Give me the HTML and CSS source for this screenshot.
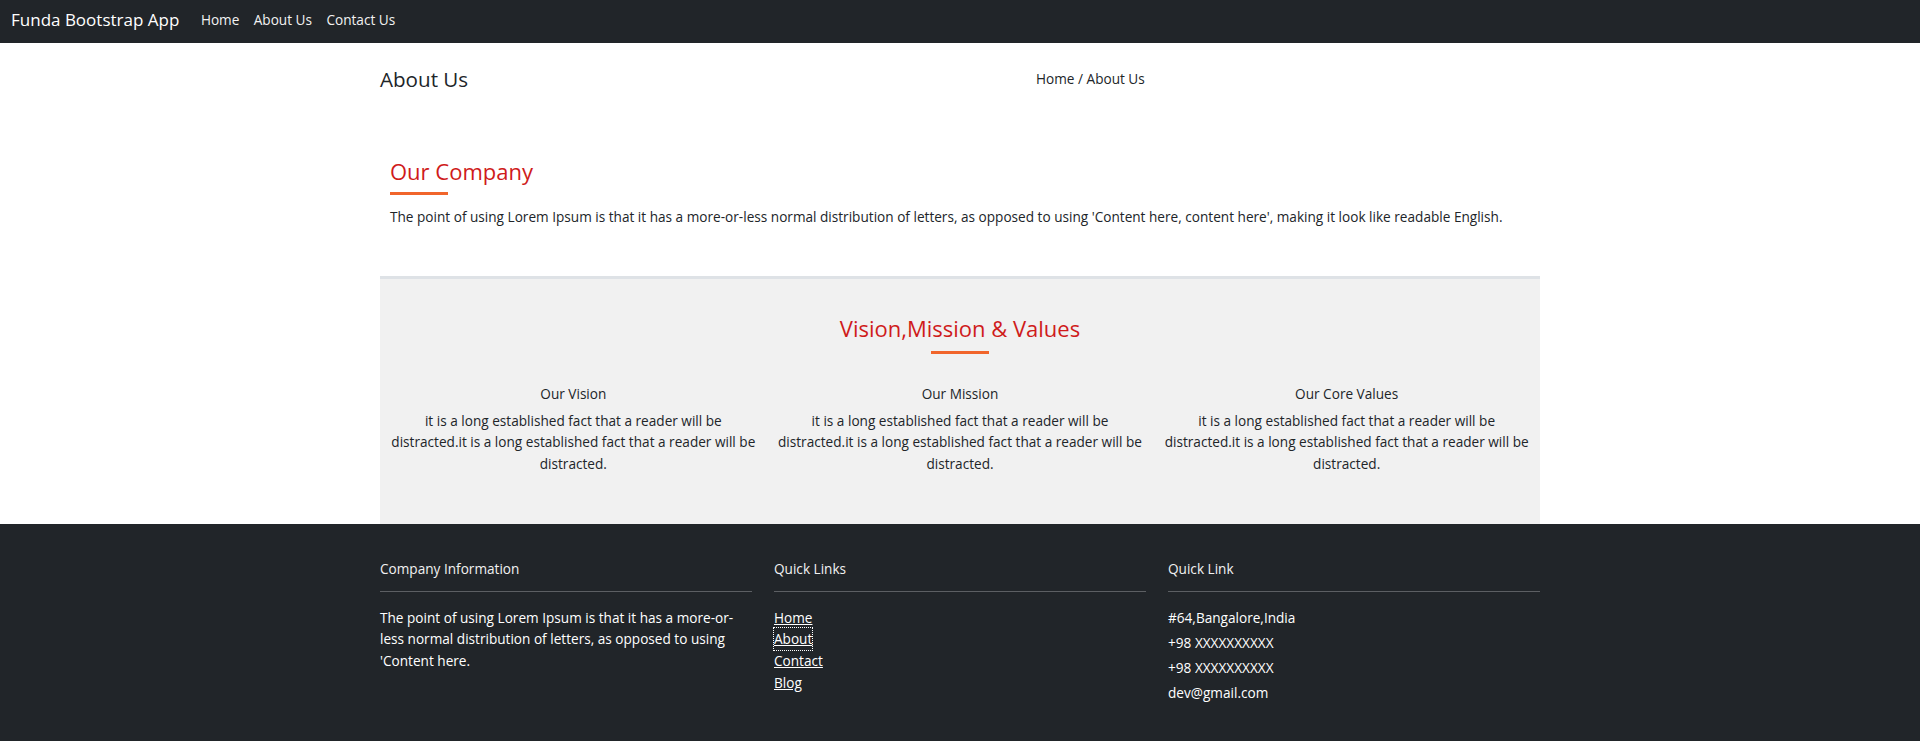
FILE: index.html
```html
<!DOCTYPE html>
<html lang="en">
<head>
<meta charset="utf-8">
<title>About Us - Funda Bootstrap App</title>
<link rel="stylesheet" href="styles.css">
</head>
<body>
<nav class="navbar">
  <a class="brand" href="#">Funda Bootstrap App</a>
  <ul class="nav-links">
    <li><a href="#">Home</a></li>
    <li><a href="#">About Us</a></li>
    <li><a href="#">Contact Us</a></li>
  </ul>
</nav>

<section class="container page-head">
  <h4 class="page-title">About Us</h4>
  <div class="crumbs">Home / About Us</div>
</section>

<section class="container company">
  <h3 class="section-title">Our Company</h3>
  <div class="underline"></div>
  <p class="company-text">The point of using Lorem Ipsum is that it has a more-or-less normal distribution of letters, as opposed to using 'Content here, content here', making it look like readable English.</p>
</section>

<section class="container vmv">
  <h3 class="section-title centered">Vision,Mission &amp; Values</h3>
  <div class="underline centered-line"></div>
  <div class="vmv-cols">
    <div class="vmv-col">
      <h6 class="vmv-title">Our Vision</h6>
      <p class="vmv-text">it is a long established fact that a reader will be distracted.it is a long established fact that a reader will be distracted.</p>
    </div>
    <div class="vmv-col">
      <h6 class="vmv-title">Our Mission</h6>
      <p class="vmv-text">it is a long established fact that a reader will be distracted.it is a long established fact that a reader will be distracted.</p>
    </div>
    <div class="vmv-col">
      <h6 class="vmv-title">Our Core Values</h6>
      <p class="vmv-text">it is a long established fact that a reader will be distracted.it is a long established fact that a reader will be distracted.</p>
    </div>
  </div>
</section>

<footer class="footer">
  <div class="container footer-cols">
    <div class="footer-col">
      <h6 class="footer-title">Company Information</h6>
      <hr class="footer-rule">
      <p class="footer-text">The point of using Lorem Ipsum is that it has a more-or-less normal distribution of letters, as opposed to using 'Content here.</p>
    </div>
    <div class="footer-col">
      <h6 class="footer-title">Quick Links</h6>
      <hr class="footer-rule">
      <ul class="footer-links">
        <li><a href="#">Home</a></li>
        <li><a href="#" class="focused">About</a></li>
        <li><a href="#">Contact</a></li>
        <li><a href="#">Blog</a></li>
      </ul>
    </div>
    <div class="footer-col">
      <h6 class="footer-title">Quick Link</h6>
      <hr class="footer-rule">
      <ul class="footer-contact">
        <li>#64,Bangalore,India</li>
        <li>+98 XXXXXXXXXX</li>
        <li>+98 XXXXXXXXXX</li>
        <li>dev@gmail.com</li>
      </ul>
    </div>
  </div>
</footer>
</body>
</html>
```

FILE: styles.css
```css
* {
  box-sizing: border-box;
}

html {
  background: #212529;
}

body {
  margin: 0;
  background: #ffffff;
  font-family: "Open Sans", "Liberation Sans", sans-serif;
  font-size: 13.62px;
  line-height: 21.6px;
  color: #212529;
}

/* Navbar */
.navbar {
  height: 43px;
  background: #212529;
  display: flex;
  align-items: center;
  padding: 0 11px 3px;
}

.brand {
  color: #ffffff;
  font-size: 17px;
  line-height: 24px;
  text-decoration: none;
  margin-right: 14.4px;
}

.nav-links {
  display: flex;
  list-style: none;
  margin: 0;
  padding: 0;
}

.nav-links a {
  display: block;
  color: #f2f2f2;
  text-decoration: none;
  padding: 0 7.2px;
}

/* Layout */
.container {
  width: 1160px;
  margin: 0 auto;
}

.page-head {
  display: grid;
  grid-template-columns: 656px 1fr;
  align-items: center;
  padding-top: 23px;
}

.page-title {
  margin: 0;
  font-size: 20.6px;
  line-height: 26px;
  font-weight: 400;
}

.crumbs {
  line-height: 21.6px;
}

/* Company */
.company {
  padding: 65.6px 10px 0;
}

.section-title {
  margin: 0;
  font-size: 22px;
  line-height: 26.4px;
  font-weight: 400;
  color: #cf1b1b;
}

.underline {
  width: 58px;
  height: 3px;
  background: #f1652b;
  margin-top: 8px;
}

.company-text {
  margin: 10.6px 0 48.8px;
}

/* Vision, Mission & Values */
.vmv {
  background: #f1f1f1;
  border-top: 3px solid #dee2e6;
  padding: 36.3px 0 49.6px;
}

.centered {
  text-align: center;
}

.centered-line {
  margin: 9.3px auto 0;
}

.vmv-cols {
  display: grid;
  grid-template-columns: repeat(3, 1fr);
  margin-top: 28.9px;
}

.vmv-col {
  padding: 0 8px;
  text-align: center;
}

.vmv-title {
  margin: 0 0 5.1px;
  font-size: 13.62px;
  line-height: 21.6px;
  font-weight: 400;
}

.vmv-text {
  margin: 0;
}

/* Footer */
.footer {
  background: #212529;
  color: #ffffff;
  padding: 34.2px 0 35.5px;
}

.footer-cols {
  display: grid;
  grid-template-columns: repeat(3, 1fr);
  column-gap: 22px;
}

.footer-title {
  margin: 0;
  font-size: 13.62px;
  line-height: 21.6px;
  font-weight: 400;
  color: #f1f1f1;
}

.footer-rule {
  border: 0;
  height: 1px;
  background: #5c5f63;
  margin: 11.2px 0 0;
}

.footer-text {
  margin: 14.9px 0 0;
}

.footer-links {
  list-style: none;
  margin: 14.9px 0 0;
  padding: 0;
}

.footer-links a {
  display: inline-block;
  color: #ffffff;
  text-decoration: underline;
}

.footer-links a.focused {
  outline: 1px dotted #ffffff;
}

.footer-contact {
  list-style: none;
  margin: 13.5px 0 0;
  padding: 0;
  line-height: 25px;
}
```
